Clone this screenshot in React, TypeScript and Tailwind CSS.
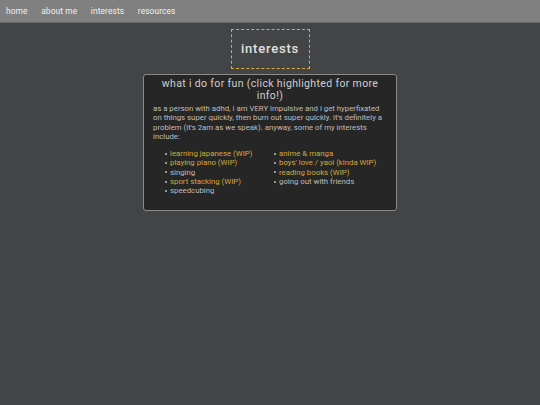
const LEFT = [
  { label: 'learning japanese (WIP)', link: true },
  { label: 'playing piano (WIP)', link: true },
  { label: 'singing', link: false },
  { label: 'sport stacking (WIP)', link: true },
  { label: 'speedcubing', link: false },
];

const RIGHT = [
  { label: 'anime & manga', link: true },
  { label: "boys' love / yaoi (kinda WIP)", link: true },
  { label: 'reading books (WIP)', link: true },
  { label: 'going out with friends', link: false },
];

function InterestList({ items }: { items: { label: string; link: boolean }[] }) {
  return (
    <ul className="w-[109px] shrink-0 pl-[12px]">
      {items.map((item) => (
        <li key={item.label} className={`flex items-center gap-[3px] whitespace-nowrap ${item.link ? 'text-[#d4a63c]' : 'text-[#bdbdbd]'}`}>
          <span className="h-[2px] w-[2px] shrink-0 rounded-full bg-[#bdbdbd]" />
          {item.label}
        </li>
      ))}
    </ul>
  );
}

export default function App() {
  return (
    <div className="min-h-[405px] bg-[#434445] font-['Roboto',sans-serif] text-[#bdbdbd]">
      {/* Nav */}
      <nav className="flex h-[23px] items-center gap-[13.6px] border-b border-[#6a6a6a] bg-[#808080] pl-[6px] pt-[1px] text-[8.4px] tracking-[0.1px] text-[#f0f0f0]">
        <span>home</span>
        <span>about me</span>
        <span>interests</span>
        <span>resources</span>
      </nav>

      <div className="flex flex-col items-center pt-[6px]">
        <div className="flex h-[40px] w-[79px] items-center justify-center border-[1.5px] border-dashed border-[#d8ab3e] text-[13px] font-medium tracking-[0.8px] text-[#e0e0e0]">
          interests
        </div>

        <section className="mt-[5px] h-[137px] w-[254px] rounded-[3px] border border-[#8a8a8a] bg-[#262626] px-[9px]">
          <h2 className="pt-[3px] text-center text-[10.5px] leading-[12px] tracking-[0.35px] text-[#cfcfcf]">
            what i do for fun (click highlighted for more info!)
          </h2>
          <p className="mt-[2px] text-[7.8px] leading-[9.3px]">
            as a person with adhd, i am VERY impulsive and i get hyperfixated on things super quickly, then burn out super quickly. it's definitely a problem (it's 2am as we speak). anyway, some of my interests include:
          </p>
          <div className="mt-[8px] flex text-[7.8px] leading-[9.3px]">
            <InterestList items={LEFT} />
            <InterestList items={RIGHT} />
          </div>
        </section>
      </div>
    </div>
  );
}
